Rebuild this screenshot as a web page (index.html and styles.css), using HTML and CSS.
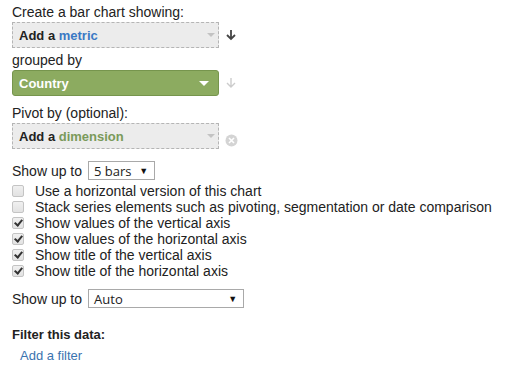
FILE: index.html
```html
<!DOCTYPE html>
<html>
<head>
<meta charset="utf-8">
<link rel="stylesheet" href="styles.css">
</head>
<body>
<div class="panel">
  <div class="label">Create a bar chart showing:</div>
  <div class="row">
    <div class="picker dashed"><span class="pick-text">Add a <span class="metric">metric</span></span><span class="caret grey"></span></div>
    <svg class="side-icon" width="12" height="12" viewBox="0 0 12 12"><path d="M6 1v9M2 6l4 4 4-4" fill="none" stroke="#444" stroke-width="1.8"/></svg>
  </div>
  <div class="label">grouped by</div>
  <div class="row">
    <div class="picker green"><span class="pick-text">Country</span><span class="caret white"></span></div>
    <svg class="side-icon" width="12" height="12" viewBox="0 0 12 12"><path d="M6 1v9M2 6l4 4 4-4" fill="none" stroke="#ccc" stroke-width="1.4"/></svg>
  </div>
  <div class="label pivot">Pivot by (optional):</div>
  <div class="row">
    <div class="picker dashed"><span class="pick-text">Add a <span class="dim">dimension</span></span><span class="caret grey"></span></div>
    <svg class="side-icon remove" width="13" height="13" viewBox="0 0 13 13"><circle cx="6.5" cy="6.5" r="6" fill="#d4d4d4"/><path d="M4 4l5 5M9 4l-5 5" stroke="#fff" stroke-width="1.6"/></svg>
  </div>

  <div class="showup first">
    <span>Show up to</span>
    <div class="select small"><span>5 bars</span><span class="tri">▼</span></div>
  </div>
  <ul class="checks">
    <li><span class="cb"></span>Use a horizontal version of this chart</li>
    <li><span class="cb"></span>Stack series elements such as pivoting, segmentation or date comparison</li>
    <li><span class="cb on"></span>Show values of the vertical axis</li>
    <li><span class="cb on"></span>Show values of the horizontal axis</li>
    <li><span class="cb on"></span>Show title of the vertical axis</li>
    <li><span class="cb on"></span>Show title of the horizontal axis</li>
  </ul>
  <div class="showup second">
    <span>Show up to</span>
    <div class="select wide"><span>Auto</span><span class="tri">▼</span></div>
  </div>
  <div class="filter-label">Filter this data:</div>
  <a class="add-filter">Add a filter</a>
</div>
</body>
</html>
```
FILE: styles.css
```css
html, body { margin: 0; padding: 0; background: #fff; }
body {
  font-family: Arial, "Liberation Sans", sans-serif;
  font-size: 14px;
  color: #222;
}
.panel { padding: 4px 0 0 12px; }
.label { line-height: 16px; height: 16px; }
.pivot { margin-top: 9px; }
.row { display: flex; align-items: center; margin-top: 2px; margin-bottom: 4px; }
.picker {
  box-sizing: border-box;
  width: 207px;
  height: 26px;
  display: flex;
  align-items: center;
  justify-content: space-between;
  padding: 0 3px 0 6px;
  font-size: 13px;
  font-weight: bold;
}
.dashed { background: #ececec; border: 1px dashed #b5b5b5; color: #222; }
.green { background: #8cab60; border: 1px solid #76954d; border-radius: 3px; color: #fff; padding-right: 9px; }
.metric { color: #3a78c4; }
.dim { color: #7a9a5a; }
.caret { width: 0; height: 0; border-left: 4px solid transparent; border-right: 4px solid transparent; }
.caret.grey { border-top: 4px solid #c3c3c3; }
.caret.white { border-left-width: 5px; border-right-width: 5px; border-top: 5px solid #fff; }
.side-icon { margin-left: 6px; }
.remove { margin-top: 8px; }
.showup { display: flex; align-items: center; gap: 6px; }
.showup.first { margin-top: 12px; }
.showup.second { margin-top: 10px; }
.select {
  box-sizing: border-box;
  height: 19px;
  border: 1px solid #a9a9a9;
  display: flex;
  align-items: center;
  justify-content: space-between;
  padding: 0 6px 0 5px;
  font-family: "Segoe UI", "Open Sans", Arial, sans-serif;
  font-size: 13px;
  color: #222;
}
.select.small { width: 67px; }
.select.wide { width: 156px; }
.tri { font-size: 9px; color: #111; }
.checks { list-style: none; margin: 3px 0 0 0; padding: 0; }
.checks li { display: flex; align-items: center; height: 16px; line-height: 16px; }
.cb {
  box-sizing: border-box;
  width: 12px; height: 12px;
  border: 1px solid #c4c4c4;
  background: linear-gradient(#f0f0f0, #e2e2e2);
  border-radius: 2px;
  margin-right: 11px;
  position: relative;
}
.cb.on::after {
  content: "";
  position: absolute;
  left: 3px; top: 0px;
  width: 3px; height: 6px;
  border-right: 2px solid #333;
  border-bottom: 2px solid #333;
  transform: rotate(40deg);
}
.filter-label { font-size: 13px; font-weight: bold; margin-top: 19px; line-height: 16px; }
.add-filter { display: inline-block; font-size: 13px; margin: 5px 0 0 8px; color: #3b73af; line-height: 16px; }
```
